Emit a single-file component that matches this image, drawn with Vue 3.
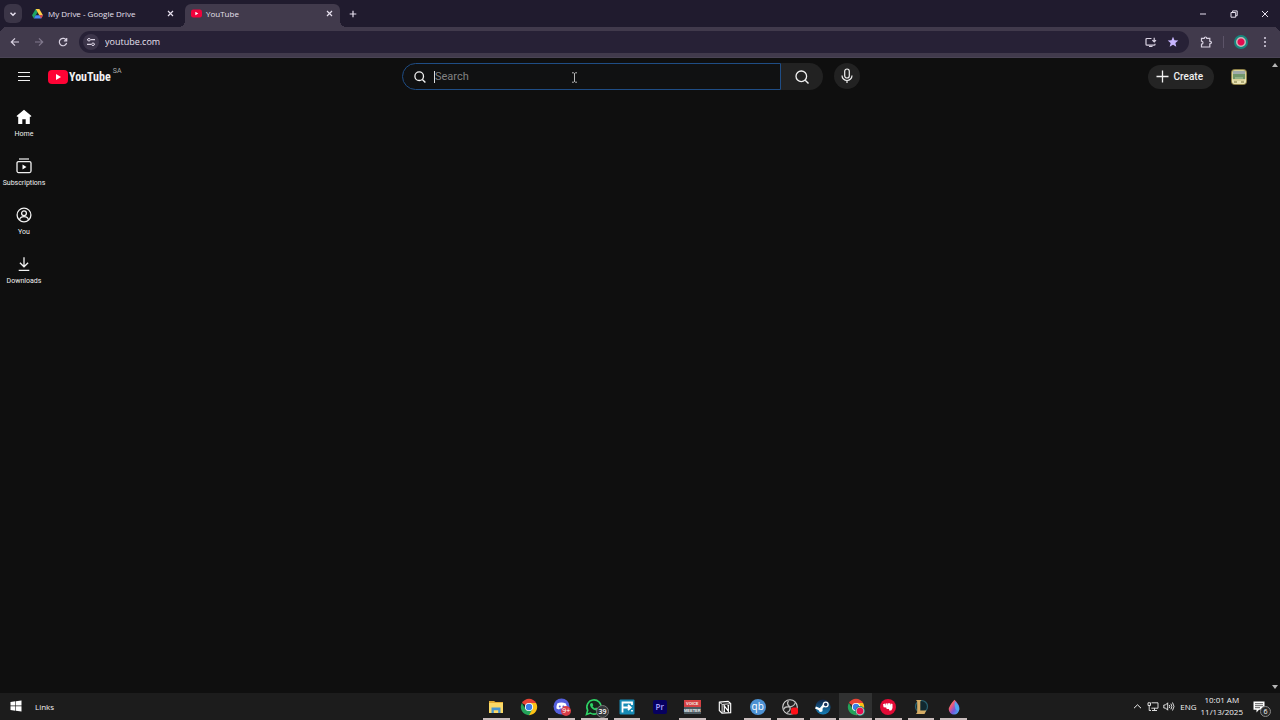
<script setup>
import { ref } from 'vue'

const query = ref('')
const address = ref('youtube.com')

const navItems = [
  { id: 'home', label: 'Home' },
  { id: 'subs', label: 'Subscriptions' },
  { id: 'you', label: 'You' },
  { id: 'downloads', label: 'Downloads' },
]

const apps = [
  { id: 'explorer', label: 'File Explorer', open: true },
  { id: 'chrome', label: 'Google Chrome', open: false },
  { id: 'discord', label: 'Discord', open: true },
  { id: 'whatsapp', label: 'WhatsApp', open: true },
  { id: 'transfer', label: 'File transfer', open: true },
  { id: 'premiere', label: 'Premiere Pro', open: false },
  { id: 'voicemeeter', label: 'Voicemeeter', open: true },
  { id: 'notion', label: 'Notion', open: false },
  { id: 'qbittorrent', label: 'qBittorrent', open: true },
  { id: 'obs', label: 'OBS Studio', open: true },
  { id: 'steam', label: 'Steam', open: true },
  { id: 'chromerec', label: 'Chrome window', open: true, active: true },
  { id: 'riot', label: 'Riot Client', open: true },
  { id: 'league', label: 'League of Legends', open: true },
  { id: 'paint', label: 'Fluid paint', open: true },
]
</script>

<template>
  <div class="screen">
    <header class="tabstrip">
      <button class="tab-search" aria-label="Search tabs">
        <svg width="8" height="8" viewBox="0 0 8 8"><path d="M1.500 2.800 4 5.200l2.500-2.400" class="ln" stroke-width="1.500" /></svg>
      </button>
      <div class="tab">
        <svg class="fav" width="11" height="11" viewBox="0 0 24 22">
          <path d="M8 1h8l-4 7z" fill="#188038" />
          <path d="M8 1 0 15l4 7 8-14z" fill="#1ea362" />
          <path d="M16 1l8 14h-8L8 1z" fill="#ffcf48" />
          <path d="M24 15l-4 7H4l4-7z" fill="#4688f4" />
          <path d="M24 15l-4 7-4-7z" fill="#ea4335" />
        </svg>
        <span class="tab-title">My Drive - Google Drive</span>
        <button class="tab-close" aria-label="Close tab">
          <svg width="7" height="7" viewBox="0 0 7 7"><path d="M1 1l5 5M6 1 1 6" class="ln" stroke-width="1.200" /></svg>
        </button>
      </div>
      <div class="tab active">
        <svg class="fav" width="11" height="11" viewBox="0 0 11 11">
          <rect x="0" y="1.500" width="11" height="8" rx="2.200" fill="#f0033c" /><path d="M4.300 3.700v3.600l3-1.800z" fill="#fff" />
        </svg>
        <span class="tab-title">YouTube</span>
        <button class="tab-close" aria-label="Close tab">
          <svg width="7" height="7" viewBox="0 0 7 7"><path d="M1 1l5 5M6 1 1 6" class="ln" stroke-width="1.200" /></svg>
        </button>
      </div>
      <button class="new-tab" aria-label="New tab">
        <svg width="8" height="8" viewBox="0 0 8 8"><path d="M4 .7v6.600M.7 4h6.600" class="ln" stroke-width="1.200" /></svg>
      </button>
      <div class="win-controls">
        <button aria-label="Minimize"><svg width="8" height="8" viewBox="0 0 8 8"><path d="M1 4h6" class="ln" /></svg></button>
        <button aria-label="Restore"><svg width="8" height="8" viewBox="0 0 8 8"><path d="M1 2.500h4.700v4.700H1zM2.600 2.300V.9h4.600v4.800H6" class="ln" stroke-width="1" /></svg></button>
        <button aria-label="Close"><svg width="8" height="8" viewBox="0 0 8 8"><path d="M1 1l6 6M7 1 1 7" class="ln" /></svg></button>
      </div>
    </header>

    <div class="toolbar">
      <button class="tool" aria-label="Back"><svg width="10" height="10" viewBox="0 0 10 10"><path d="M9 5H1.500M5 1.300 1.300 5 5 8.700" class="ln" stroke-width="1.200" /></svg></button>
      <button class="tool dim" aria-label="Forward"><svg width="10" height="10" viewBox="0 0 10 10"><path d="M1 5h7.500M5 1.300 8.700 5 5 8.700" class="ln" stroke-width="1.200" /></svg></button>
      <button class="tool" aria-label="Reload"><svg width="10" height="10" viewBox="0 0 10 10"><path d="M8.400 3.500A3.700 3.700 0 1 0 8.600 6M8.700 1v2.800H5.900" class="ln" stroke-width="1.200" /></svg></button>
      <div class="omnibox">
        <button class="site-info" aria-label="Site information">
          <svg width="10" height="10" viewBox="0 0 10 10"><path d="M1 2.700h1M4.600 2.700H9M1 7.300h4.400M8.200 7.300H9" class="ln" stroke-width="1.200" /><circle cx="3" cy="2.700" r="1.300" class="ln" /><circle cx="7" cy="7.300" r="1.300" class="ln" /></svg>
        </button>
        <input v-model="address" class="address" aria-label="Address" />
        <button class="omni-btn" aria-label="Install app">
          <svg width="12" height="11" viewBox="0 0 12 11"><path d="M6.500 1.500H1.900q-.9 0-.9.900v4.800q0 .9.900.9h7.200q.9 0 .9-.9V6.800M4 9.500h3.500M9.200.8v4M7.400 3.200l1.800 1.800L11 3.200" class="ln" stroke-width="1.200" /></svg>
        </button>
        <button class="omni-btn" aria-label="Bookmark">
          <svg width="12" height="12" viewBox="0 0 12 12"><path d="M6 .7l1.500 3.500 3.800.3-2.900 2.500.9 3.800L6 8.800l-3.300 2 .9-3.800L.7 4.500l3.800-.3z" fill="#c8b6ff" /></svg>
        </button>
      </div>
      <button class="ext" aria-label="Extensions">
        <svg width="13" height="12" viewBox="0 0 13 12"><path d="M1.500 2.400h2.700Q4.300 1 5.500 1t1.300 1.400h3v2.900q1.700.1 1.700 1.300T9.800 7.900V11H1.500V8.200Q3 8 3 6.700T1.500 5.200z" class="ln" stroke-width="1.200" /></svg>
      </button>
      <span class="divider"></span>
      <button class="profile" aria-label="Profile"></button>
      <button class="more" aria-label="More options">
        <svg width="4" height="12" viewBox="0 0 4 12" fill="#ddd6e6"><circle cx="2" cy="2" r="1" /><circle cx="2" cy="6" r="1" /><circle cx="2" cy="10" r="1" /></svg>
      </button>
    </div>

    <div class="page">
      <header class="masthead">
        <div class="brand">
          <button class="menu" aria-label="Guide"><svg width="12" height="11" viewBox="0 0 12 11"><path d="M0 1.500h12M0 5.500h12M0 9.500h12" class="ln" stroke-width="1.200" /></svg></button>
          <a class="logo" href="#" aria-label="YouTube home">
            <svg width="20" height="14" viewBox="0 0 20 14"><rect width="20" height="14" rx="4" fill="#ff0335" /><path d="M8 4v6l5-3z" fill="#fff" /></svg>
            <span class="wordmark">YouTube</span>
            <span class="country">SA</span>
          </a>
        </div>
        <div class="center">
          <form class="search" @submit.prevent>
            <label class="field">
              <svg width="12" height="12" viewBox="0 0 12 12"><circle cx="5.200" cy="5.200" r="4.300" class="ln" stroke-width="1.300" /><path d="M8.400 8.400l3 3" class="ln" stroke-width="1.400" /></svg>
              <span class="caret"></span>
              <input v-model="query" placeholder="Search" aria-label="Search" />
              <svg class="pointer" width="7" height="11" viewBox="0 0 7 11"><path d="M1 .8h1.500l1 .7 1-.7H6M3.500 1.500v8M1 10.200h1.500l1-.7 1 .7H6" class="ln" stroke-width=".9" /></svg>
            </label>
            <button class="go" aria-label="Submit search">
              <svg width="14" height="14" viewBox="0 0 14 14"><circle cx="6.300" cy="6.300" r="5.300" class="ln" stroke-width="1.300" /><path d="M10.200 10.200l3.300 3.300" class="ln" stroke-width="1.400" /></svg>
            </button>
          </form>
          <button class="mic" aria-label="Search with your voice">
            <svg width="12" height="16" viewBox="0 0 12 16"><rect x="3.700" y="1" width="4.600" height="9" rx="2.300" class="ln" stroke-width="1.200" /><path d="M1 7.500a5 5 0 0 0 10 0M6 12.600V15" class="ln" stroke-width="1.200" /></svg>
          </button>
        </div>
        <div class="user">
          <button class="create">
            <svg width="13" height="13" viewBox="0 0 13 13"><path d="M6.500.5v12M.5 6.500h12" class="ln" stroke-width="1.300" /></svg>
            <span>Create</span>
          </button>
          <button class="avatar" aria-label="Account">
            <svg width="16" height="16" viewBox="0 0 16 16">
              <rect width="16" height="16" rx="4" fill="#8d8048" /><rect x="1" y="1" width="14" height="14" rx="3" fill="#d7d19a" />
              <rect x="2" y="2" width="12" height="4" fill="#9fabaa" /><rect x="2" y="5" width="12" height="5" fill="#71976b" />
              <path d="M1 9l2 3h10l2-3v4l-2 2H3l-2-2z" fill="#e9e3b3" /><path d="M3 13h3M10 13h3" stroke="#77723d" stroke-width="1" /><rect x="4" y="8" width="8" height="2" fill="#91b186" />
            </svg>
          </button>
        </div>
      </header>

      <nav class="rail">
        <a v-for="item in navItems" :key="item.id" href="#">
          <svg width="16" height="16" viewBox="0 0 16 16">
            <path v-if="item.id === 'home'" d="M8 .8l7.200 6v.9h-1.400V15H9.700v-4.700H6.300V15H2.200V7.700H.8v-.9z" fill="#fff" />
            <template v-else-if="item.id === 'subs'">
              <path d="M3 1h10" class="ln" stroke-width="1.200" /><rect x="1" y="3.600" width="14" height="11" rx="1.500" class="ln" stroke-width="1.300" /><path d="M6.500 6.500v5l4-2.500z" fill="#fff" />
            </template>
            <template v-else-if="item.id === 'you'">
              <circle cx="8" cy="8" r="6.900" class="ln" stroke-width="1.300" /><circle cx="8" cy="6.300" r="2.400" class="ln" stroke-width="1.300" /><path d="M3.600 13c.5-4.400 8.300-4.400 8.800 0" class="ln" stroke-width="1.300" />
            </template>
            <path v-else d="M8 1.300v9.200M3.900 6.700 8 10.800l4.100-4.100M2.700 14.300h10.600" class="ln" stroke-width="1.300" />
          </svg>
          <span>{{ item.label }}</span>
        </a>
      </nav>

      <div class="scrollbar" aria-hidden="true">
        <svg width="6" height="4" viewBox="0 0 6 4"><path d="M3 0l3 4H0z" fill="#b5b5b5" /></svg>
        <svg width="6" height="4" viewBox="0 0 6 4"><path d="M0 0h6L3 4z" fill="#b5b5b5" /></svg>
      </div>
    </div>

    <footer class="taskbar">
      <div class="start-area">
        <button class="start" aria-label="Start">
          <svg width="12" height="12" viewBox="0 0 12 12" fill="#fff"><path d="M.5 2 5.300 1.300v4.300H.5zM5.900 1.200 11.500.4v5.200H5.900zM.5 6.300h4.800v4.400L.5 10zM5.900 6.300h5.600v5.300l-5.600-.8z" /></svg>
        </button>
        <span>Links</span>
      </div>

      <div class="apps">
        <button v-for="app in apps" :key="app.id" :class="{ open: app.open, current: app.active }" :aria-label="app.label">
          <svg v-if="app.id === 'explorer'" width="18" height="18" viewBox="0 0 18 18">
            <path d="M2 3h5l1.500 1H16v11H2z" fill="#e3ad35" /><path d="M2 5h14v10H2z" fill="#fbd967" /><path d="M4.500 15V9.500h9V15h-2.300v-2.800H6.800V15z" fill="#4795d1" />
          </svg>
          <svg v-else-if="app.id === 'chrome' || app.id === 'chromerec'" width="18" height="18" viewBox="0 0 18 18">
            <path d="M9 9 1.900 4.900A8.200 8.200 0 0 1 16.100 4.900z" fill="#e84335" /><path d="M9 9V4.900h7.100A8.200 8.200 0 0 1 9 17.200z" fill="#fbc116" /><path d="M1.900 4.900 5.500 11 9 13l3.500-2L9 17.200A8.200 8.200 0 0 1 1.900 4.900z" fill="#24a35a" />
            <circle cx="9" cy="9" r="4.100" fill="#fff" /><circle cx="9" cy="9" r="3.200" fill="#3b7de9" />
            <g v-if="app.id === 'chromerec'"><circle cx="13" cy="13" r="4.900" fill="#148579" /><circle cx="13" cy="13" r="4.300" fill="#b5b6b1" /><circle cx="13" cy="13" r="3.200" fill="#e80d52" /></g>
          </svg>
          <svg v-else-if="app.id === 'discord'" width="18" height="18" viewBox="0 0 18 18">
            <circle cx="8.500" cy="8.500" r="8" fill="#5560dd" /><path d="M4.200 5.500q4-2 8.600 0 1.300 2.500 1 5l-2.300 1-1-1H7l-1 1-2.600-1q0-3 .8-5z" fill="#fff" /><circle cx="6.800" cy="8.500" r="1" fill="#5560dd" /><circle cx="10.400" cy="8.500" r="1" fill="#5560dd" />
          </svg>
          <svg v-else-if="app.id === 'whatsapp'" width="18" height="18" viewBox="0 0 18 18">
            <path d="M1.500 16.500l1.200-4.200a7.100 7.100 0 1 1 2.700 2.800z" fill="#16251b" stroke="#2fd366" stroke-width="1.600" /><path d="M5.800 5.200l1.500-.2 1 2.200-.8 1.100q.8 1.600 2.500 2.200l1-1 2 1q0 1.800-1.900 1.900Q6 11.500 5 7q0-1 .8-1.800z" fill="#2fd366" />
          </svg>
          <svg v-else-if="app.id === 'transfer'" width="16" height="16" viewBox="0 0 16 16">
            <rect x=".5" y=".5" width="15" height="15" rx="1" fill="#168ab5" /><path d="M3.500 13.500v-10h9.500v2.500M3.500 8.500h8M9 6l2.700 2.500L9 11M13 11v1.500" fill="none" stroke="#fff" stroke-width="1.800" />
          </svg>
          <span v-else-if="app.id === 'premiere'" class="premiere">Pr</span>
          <span v-else-if="app.id === 'voicemeeter'" class="voice"><b>VOICE</b><b>MEETER</b></span>
          <svg v-else-if="app.id === 'notion'" width="14" height="14" viewBox="0 0 16 16">
            <path d="M1.500 2.500 11.500 1.500l3 2.500v10.500l-10 .5-3-3z" fill="#111" stroke="#fff" stroke-width="1.300" /><path d="M2 3l3 2 9.200-.7M4.700 5v9.500" fill="none" stroke="#fff" /><path d="M7.200 13V6.700l4.600 6V6.300M6.200 6.700h2M10.800 6.300h2M6.200 13h2" fill="none" stroke="#fff" stroke-width="1.400" />
          </svg>
          <span v-else-if="app.id === 'qbittorrent'" class="qb">qb</span>
          <svg v-else-if="app.id === 'obs'" width="18" height="18" viewBox="0 0 18 18">
            <circle cx="9" cy="9" r="7.300" fill="#222" stroke="#cfcfcf" stroke-width="1.100" /><path d="M7.500 3q-2.500 3 1.500 6 4.800-1 5.500-5M9 9q-5-1-6.500 2.500M9 9q.8 4-3 5.500" fill="none" stroke="#bcbcbc" stroke-width="1.300" /><rect x="10" y="9.500" width="7" height="7" rx="2" fill="#ff1018" />
          </svg>
          <svg v-else-if="app.id === 'steam'" width="18" height="18" viewBox="0 0 18 18">
            <defs><linearGradient id="steamFill" x2="0" y2="1"><stop stop-color="#102244" /><stop offset="1" stop-color="#1680b8" /></linearGradient></defs>
            <circle cx="9" cy="9" r="7.600" fill="url(#steamFill)" /><path d="M1.500 9.500l4.700 2L10 7" fill="none" stroke="#fff" stroke-width="2.400" /><circle cx="11.700" cy="6.500" r="2.400" fill="#163059" stroke="#fff" stroke-width="1.300" /><circle cx="6.700" cy="12" r="2" fill="#fff" />
          </svg>
          <svg v-else-if="app.id === 'riot'" width="18" height="18" viewBox="0 0 18 18">
            <circle cx="9" cy="9" r="8" fill="#e20b36" /><path d="M4 6.300l1.900-.7.2 2.200.5-2.400 1.900-.2.200 2.300.4-2.300 1.900.1.100 2.300.5-2.200 1.900.5v4.200l-1 2.200-2 .4-.6-1.700-2.200-.1-.5-1.300-2.600-.3z" fill="#fff" />
          </svg>
          <svg v-else-if="app.id === 'league'" width="16" height="16" viewBox="0 0 16 16">
            <circle cx="8.500" cy="7.500" r="6" fill="#10282f" stroke="#2a6270" stroke-width="1.200" /><path d="M3 1h5.500L7.300 2.300v9.200h6L11.500 15H3l1.200-1.700V2.500z" fill="#d5ac65" />
          </svg>
          <svg v-else width="14" height="18" viewBox="0 0 16 18">
            <defs><linearGradient id="dropFill" x2="1" y2="1"><stop stop-color="#ffb83d" /><stop offset=".35" stop-color="#ed587c" /><stop offset=".6" stop-color="#7657dd" /><stop offset="1" stop-color="#37c5f5" /></linearGradient></defs>
            <path d="M8.500.7q6.500 6 5.500 11a6 6 0 0 1-12 0Q2 8 8.500.7z" fill="url(#dropFill)" /><path d="M9 2q5.500 6 5 10-2.500 3-4.500-1Q8 7 9 2z" fill="#50a9ee" />
          </svg>
          <span v-if="app.id === 'discord'" class="badge red">9+</span>
          <span v-if="app.id === 'whatsapp'" class="badge grey">39</span>
        </button>
      </div>

      <div class="tray">
        <button aria-label="Show hidden icons"><svg width="9" height="9" viewBox="0 0 9 9"><path d="M1 6.200 4.500 2.800 8 6.200" class="ln" /></svg></button>
        <button aria-label="Network"><svg width="12" height="11" viewBox="0 0 12 11"><path d="M4.500 1.800H11v5.400H4.300M7.500 7.200v2M5 9.500h5M1 1.800h2.500v2.700H1zM2.200 4.500v5M2.200 9.500H4" class="ln" stroke-width=".9" /></svg></button>
        <button aria-label="Volume"><svg width="12" height="11" viewBox="0 0 12 11"><path d="M.8 4h1.700L4.700 1.800v7.400L2.500 7H.8zM6.300 4q1 1.500 0 3M7.900 2.700q2 2.800 0 5.600M9.500 1.500q3 4 0 8" class="ln" stroke-width=".9" /></svg></button>
        <span class="lang">ENG</span>
        <time class="clock" datetime="2025-11-13T10:01"><span>10:01 AM</span><span>11/13/2025</span></time>
        <button class="notes" aria-label="Notifications">
          <svg width="12" height="12" viewBox="0 0 12 12"><path d="M.5.5h11v8.300H6L3.500 11.500V8.800h-3z" fill="#fff" /><path d="M2 2.700h8M2 4.700h8M2 6.700h5" stroke="#333" stroke-width=".8" /></svg>
          <span class="badge count">6</span>
        </button>
      </div>
    </footer>
  </div>
</template>

<style>
body { background: #0f0f0f; }
</style>

<style scoped>
.screen { min-height: 100vh; display: flex; flex-direction: column; background: #0f0f0f; color: #f1f1f1; font-family: "Open Sans", "Noto Sans", sans-serif; font-size: 8px; }
.screen *, .screen *::before, .screen *::after { box-sizing: border-box; }
svg { display: block; flex: none; }
.ln { fill: none; stroke: currentColor; }
button { display: flex; align-items: center; justify-content: center; padding: 0; border: 0; background: none; color: inherit; font: inherit; flex: none; }
input { border: 0; outline: 0; padding: 0; min-width: 0; background: none; color: inherit; font: inherit; }
a { color: inherit; text-decoration: none; }

.tabstrip { height: 27px; display: flex; align-items: center; background: #201b2e; color: #e6e0ee; padding-left: 4px; }
.tab-search { width: 18px; height: 19px; border-radius: 6px; background: #3b3547; }
.tab { display: flex; align-items: center; gap: 5px; width: 155px; height: 23px; margin-top: 4px; padding: 0 6px 4px; }
.tab:not(.active) { margin-left: 4px; }
.tab.active { margin-left: 4px; background: #413a4c; border-radius: 6px 6px 0 0; position: relative; gap: 4px; }
.tab.active::before, .tab.active::after { content: ""; position: absolute; bottom: 0; width: 6px; height: 6px; }
.tab.active::before { right: 100%; background: radial-gradient(circle at 0 0, #201b2e 6px, #413a4c 6px); }
.tab.active::after { left: 100%; background: radial-gradient(circle at 100% 0, #201b2e 6px, #413a4c 6px); }
.tab-title { flex: 1; white-space: nowrap; }
.tab-close { width: 9px; height: 12px; }
.new-tab { width: 16px; height: 16px; margin-left: 5px; }
.win-controls { display: flex; margin-left: auto; }
.win-controls button { width: 31px; height: 27px; }

.toolbar { height: 31px; display: flex; align-items: center; padding: 0 7px; border-bottom: 1px solid #4a4455; color: #d9d2e2; background: radial-gradient(circle at 7px 7px, #413a4c 7px, #201b2e 7px) 0 0 / 7px 7px no-repeat, radial-gradient(circle at 0 7px, #413a4c 7px, #201b2e 7px) 100% 0 / 7px 7px no-repeat, #413a4c; }
.tool { width: 16px; height: 16px; margin-right: 8px; }
.dim { color: #81798d; }
.omnibox { flex: 1; height: 22px; display: flex; align-items: center; padding: 0 9px 0 4px; border-radius: 11px; background: #272136; }
.site-info { width: 16px; height: 16px; border-radius: 50%; background: #3c354a; }
.address { flex: 1; margin-left: 6px; font-size: 9px; line-height: 14px; color: #e6e0ee; }
.omni-btn { width: 14px; margin-left: 8px; }
.ext { width: 14px; margin-left: 10px; }
.divider { width: 1px; height: 12px; margin: 0 10px; background: #5c5468; }
.profile { width: 14px; height: 14px; border-radius: 50%; border: 2px solid #16877d; background: radial-gradient(circle, #e40b50 3px, #c5b9b9 4px); }
.more { width: 16px; margin-left: 9px; }

.page { flex: 1; display: flex; flex-direction: column; position: relative; font-family: Roboto, "Liberation Sans", sans-serif; }
.masthead { height: 37px; display: grid; grid-template-columns: minmax(130px, 1fr) minmax(0, 458px) minmax(130px, 1fr); align-items: center; padding-right: 18px; }
.brand, .user { display: flex; align-items: center; }
.menu { width: 12px; margin: 0 18px; }
.logo { display: flex; align-items: center; }
.wordmark { margin-left: 1px; font-family: "Liberation Sans Narrow", "Roboto Condensed", "DejaVu Sans Condensed", sans-serif; font-weight: 700; font-size: 12px; line-height: 18px; }
.country { align-self: flex-start; margin-left: 2px; font-size: 7px; line-height: 7px; color: #aaa; }
.center { display: flex; gap: 11px; }
.search { flex: 1; display: flex; height: 27px; }
.field { flex: 1; display: flex; align-items: center; position: relative; padding-left: 11px; border: 1px solid #1f4d85; border-radius: 14px 0 0 14px; background: #101112; }
.field input { flex: 1; font-size: 11px; line-height: 14px; }
.field input::placeholder { color: #828282; opacity: 1; }
.caret { width: 1px; height: 12px; margin-left: 8px; background: #ddd; }
.pointer { position: absolute; left: 168px; top: 8px; color: #ccc; }
.go { width: 42px; border-radius: 0 14px 14px 0; background: #222; }
.mic { width: 26px; height: 26px; border-radius: 50%; background: #222; }
.user { justify-content: flex-end; padding-right: 15px; gap: 17px; }
.create { gap: 5px; height: 24px; padding: 0 11px 0 8px; border-radius: 12px; background: #242424; font-weight: 500; font-size: 10px; }
.rail { display: flex; flex-direction: column; width: 48px; gap: 9px; padding-top: 14px; }
.rail a { display: flex; flex-direction: column; align-items: center; gap: 5px; height: 40px; font-size: 7px; line-height: 8px; font-weight: 400; -webkit-text-stroke: 0; }
.scrollbar { position: absolute; top: 5px; right: 2px; bottom: 4px; display: flex; flex-direction: column; justify-content: space-between; }

.taskbar { height: 27px; display: flex; background: #1c1c1c; }
.start-area { flex: 0 1 480px; display: flex; align-items: center; padding: 0 0 1px 9px; gap: 13px; }
.start { width: 13px; }
.apps { flex: none; width: 490px; display: grid; grid-template-columns: repeat(15, 1fr); }
.apps button { position: relative; }
.apps button.current { background: #303131; }
.apps button.open::after { content: ""; position: absolute; left: 3px; right: 3px; bottom: 0; height: 2px; background: #c9bdbd; }
.apps button.current::after { left: 0; right: 0; }
.premiere { width: 14px; height: 14px; border-radius: 2px; background: #06005f; color: #aaa6ff; font-size: 8px; line-height: 14px; font-weight: 600; }
.voice { width: 17px; display: grid; font-family: "Liberation Sans", sans-serif; font-size: 4px; line-height: 7px; text-align: center; background: #4b5960; }
.voice b:first-child { background: #d54143; }
.qb { width: 16px; height: 16px; border-radius: 50%; background: #4c91d3; color: #fff; font-size: 10px; line-height: 14px; }
.badge { position: absolute; border-radius: 50%; text-align: center; color: #fff; }
.red { left: 16px; top: 13px; width: 10px; height: 10px; background: #d83d47; font-size: 7px; line-height: 10px; }
.grey { left: 18px; top: 12px; width: 13px; height: 13px; background: #35383b; border: 1px solid #777; font-size: 7px; line-height: 11px; font-weight: 600; }
.tray { margin-left: auto; display: flex; align-items: center; padding-right: 9px; }
.tray > button { width: 12px; margin-right: 4px; }
.lang { margin: 0 4px 0 1px; }
.clock { display: flex; flex-direction: column; align-items: center; line-height: 12px; padding-bottom: 1px; }
.tray .notes { position: relative; margin: 0 0 0 10px; width: 18px; height: 27px; justify-content: flex-start; }
.count { left: 7px; top: 13px; width: 11px; height: 11px; border: 1px solid #888; background: #292929; font-size: 7px; line-height: 9px; }
</style>
